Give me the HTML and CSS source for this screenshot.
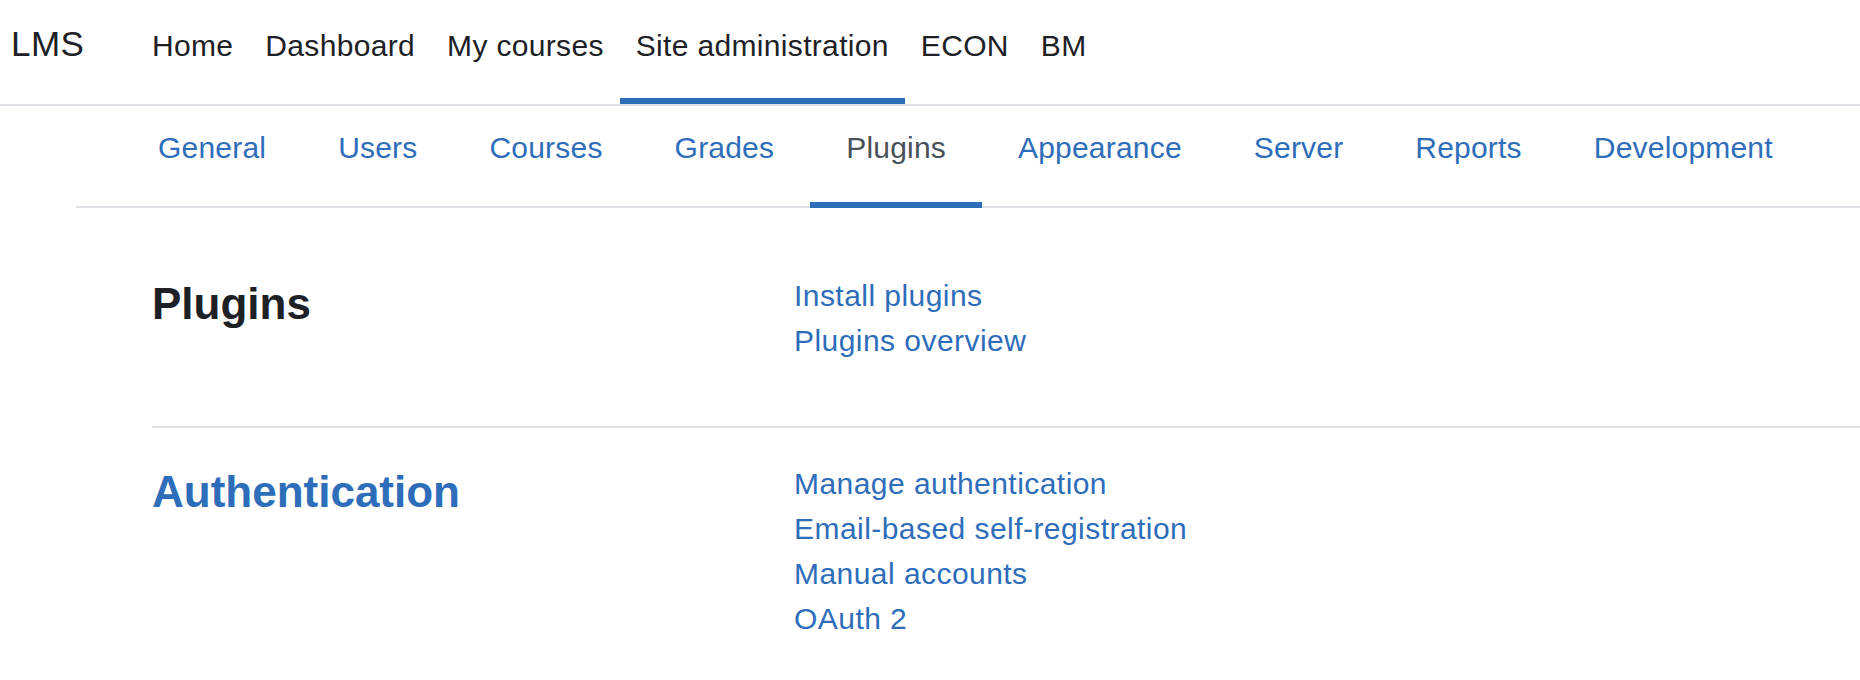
FILE: index.html
```html
<!DOCTYPE html>
<html lang="en">
<head>
<meta charset="utf-8">
<title>Plugins - Site administration</title>
<link rel="stylesheet" href="styles.css">
</head>
<body>
<header class="topbar">
  <div class="brand">LMS</div>
  <nav class="primary">
    <a class="primary-link" href="#">Home</a>
    <a class="primary-link" href="#">Dashboard</a>
    <a class="primary-link" href="#">My courses</a>
    <a class="primary-link active" href="#">Site administration</a>
    <a class="primary-link" href="#">ECON</a>
    <a class="primary-link" href="#">BM</a>
  </nav>
</header>
<nav class="secondary">
  <a class="secondary-link" href="#">General</a>
  <a class="secondary-link" href="#">Users</a>
  <a class="secondary-link" href="#">Courses</a>
  <a class="secondary-link" href="#">Grades</a>
  <a class="secondary-link active" href="#">Plugins</a>
  <a class="secondary-link" href="#">Appearance</a>
  <a class="secondary-link" href="#">Server</a>
  <a class="secondary-link" href="#">Reports</a>
  <a class="secondary-link" href="#">Development</a>
</nav>
<main class="content">
  <section class="admin-row first">
    <h2 class="row-title">Plugins</h2>
    <ul class="row-links">
      <li><a href="#">Install plugins</a></li>
      <li><a href="#">Plugins overview</a></li>
    </ul>
  </section>
  <section class="admin-row">
    <h2 class="row-title"><a href="#">Authentication</a></h2>
    <ul class="row-links">
      <li><a href="#">Manage authentication</a></li>
      <li><a href="#">Email-based self-registration</a></li>
      <li><a href="#">Manual accounts</a></li>
      <li><a href="#">OAuth 2</a></li>
    </ul>
  </section>
</main>
</body>
</html>
```

FILE: styles.css
```css
html, body {
  margin: 0;
  padding: 0;
  background: #ffffff;
  overflow: hidden;
}

body {
  font-family: "Liberation Sans", Arial, sans-serif;
  font-size: 30px;
  line-height: 45px;
  letter-spacing: 0.45px;
  color: #1d2125;
}

a {
  text-decoration: none;
  color: #2e6db9;
}

.topbar {
  display: flex;
  align-items: stretch;
  height: 104px;
  border-bottom: 2px solid #dee2e6;
}

.brand {
  width: 136px;
  box-sizing: border-box;
  padding-left: 11px;
  padding-top: 18px;
  font-size: 35px;
  line-height: 52px;
  letter-spacing: 0.5px;
  color: #1d2125;
}

.primary {
  display: flex;
  align-items: stretch;
}

.primary-link {
  display: block;
  padding: 23px 16px 0;
  letter-spacing: 0.33px;
  color: #1d2125;
  border-bottom: 6px solid transparent;
}

.primary-link.active {
  border-bottom-color: #2e6db9;
}

.secondary {
  display: flex;
  margin-left: 76px;
  padding-left: 46px;
  height: 100px;
  border-bottom: 2px solid #dee2e6;
}

.secondary-link {
  display: block;
  padding: 19px 36px 0;
  margin-bottom: -2px;
  letter-spacing: 0.2px;
  border-bottom: 6px solid transparent;
  color: #2e6db9;
}

.secondary-link.active {
  color: #495057;
  border-bottom-color: #2e6db9;
}

.content {
  margin-left: 152px;
}

.admin-row {
  display: grid;
  grid-template-columns: 642px 1fr;
  padding-top: 33px;
}

.admin-row.first {
  padding-top: 65px;
  padding-bottom: 63px;
  border-bottom: 2px solid #dee2e6;
}

.row-title {
  margin: 4px 0 0;
  font-size: 44px;
  line-height: 53px;
  font-weight: 700;
  letter-spacing: 0;
  color: #1d2125;
}

.row-title a {
  color: #2e6db9;
}

.row-links {
  list-style: none;
  margin: 0;
  padding: 0;
}

.row-links li {
  margin: 0;
}
```
